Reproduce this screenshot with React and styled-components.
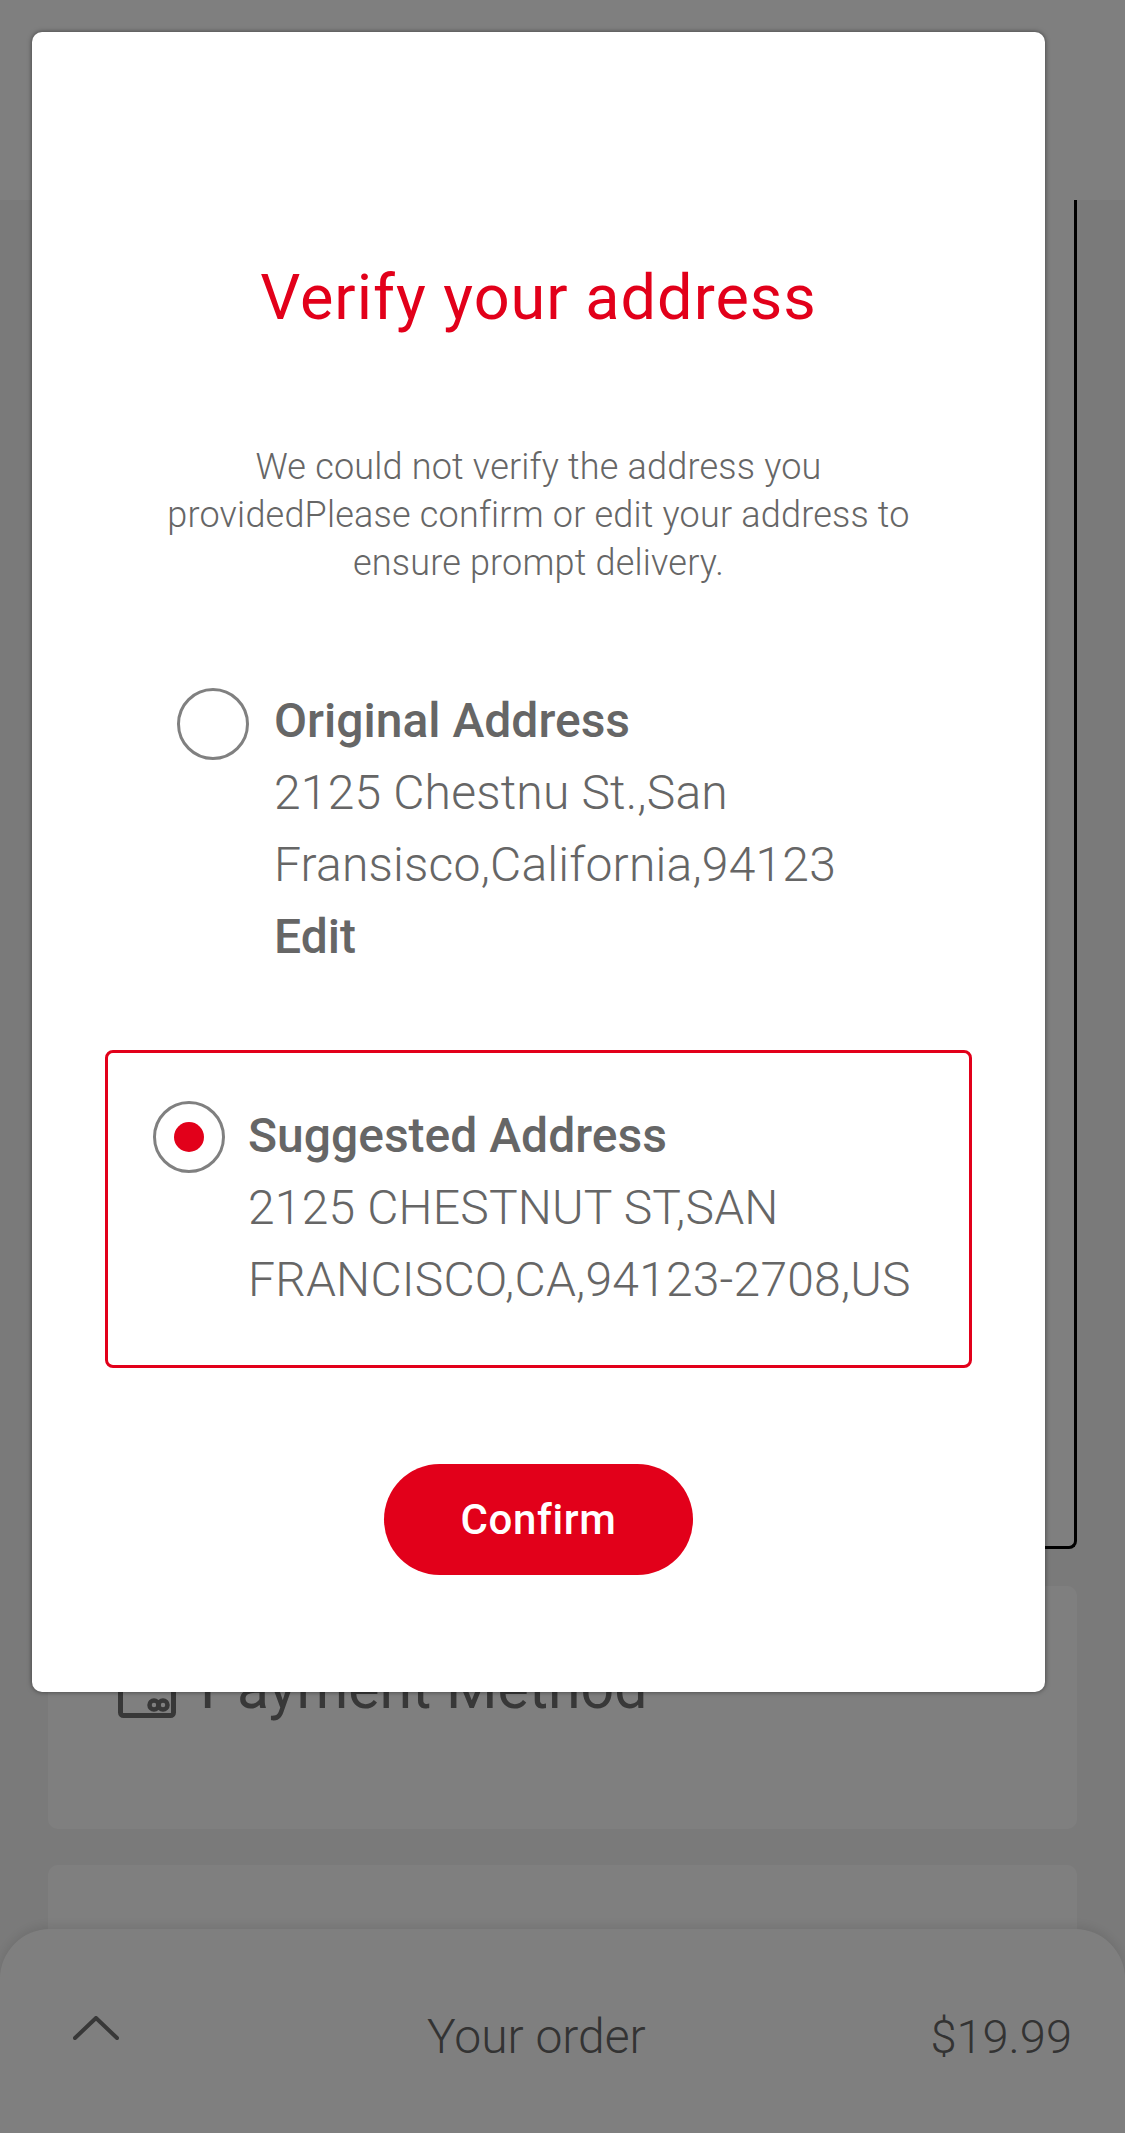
import styled, { createGlobalStyle } from 'styled-components';

const GlobalStyle = createGlobalStyle`
  html, body {
    margin: 0;
    padding: 0;
    background: #f5f5f5;
  }
  * {
    box-sizing: border-box;
  }
  body {
    font-family: Roboto, "Liberation Sans", sans-serif;
  }
`;

const App = () => {
  return (
    <Page>
      <GlobalStyle />
      <Header />
      <Content>
        <FocusedCard />
        <PaymentCard>
          <CardIcon viewBox="0 0 58 46" fill="none" stroke="#707070">
            <rect x="2.5" y="2.5" width="53" height="41" rx="3" strokeWidth="5" />
            <circle cx="36" cy="33" r="4.5" strokeWidth="4.5" />
            <circle cx="45" cy="33" r="4.5" strokeWidth="4.5" />
          </CardIcon>
          <CardTitle>Payment Method</CardTitle>
        </PaymentCard>
        <LastCard />
      </Content>
      <OrderBar>
        <Chevron viewBox="0 0 46 24" fill="none" stroke="#707070" strokeWidth="4" strokeLinecap="round" strokeLinejoin="round">
          <polyline points="2,22 23,2 44,22" />
        </Chevron>
        <OrderLabel>Your order</OrderLabel>
        <OrderTotal>$19.99</OrderTotal>
      </OrderBar>
      <Scrim>
        <Dialog>
          <Title>Verify your address</Title>
          <Message>
            We could not verify the address you providedPlease confirm or edit your address to ensure prompt delivery.
          </Message>
          <AddressOption>
            <Radio />
            <AddressText>
              <Strong>Original Address</Strong>
              <div>2125 Chestnu St.,San</div>
              <div>Fransisco,California,94123</div>
              <Strong>Edit</Strong>
            </AddressText>
          </AddressOption>
          <SelectedOption>
            <Radio $checked />
            <AddressText>
              <Strong>Suggested Address</Strong>
              <div>2125 CHESTNUT ST,SAN</div>
              <div>FRANCISCO,CA,94123-2708,US</div>
            </AddressText>
          </SelectedOption>
          <ConfirmButton>Confirm</ConfirmButton>
        </Dialog>
      </Scrim>
    </Page>
  );
};

export default App;

const Page = styled.div`
  position: relative;
  width: 1125px;
  height: 2133px;
  overflow: hidden;
  background: #f5f5f5;
`;

const Header = styled.div`
  height: 200px;
  background: #fff;
`;

const Content = styled.div`
  display: flex;
  flex-direction: column;
  padding: 0 48px;
`;

const FocusedCard = styled.div`
  height: 1349px;
  background: #fff;
  border: 3px solid #000;
  border-top: 0;
  border-radius: 0 0 8px 8px;
`;

const PaymentCard = styled.div`
  display: flex;
  align-items: flex-end;
  gap: 24px;
  height: 243px;
  margin-top: 37px;
  padding: 0 70px 111px;
  background: #fff;
  border-radius: 10px;
`;

const CardIcon = styled.svg`
  width: 58px;
  height: 46px;
  flex: none;
`;

const CardTitle = styled.div`
  font-size: 59px;
  line-height: 60px;
  color: #707070;
  white-space: nowrap;
`;

const LastCard = styled.div`
  height: 300px;
  margin-top: 36px;
  background: #fff;
  border-radius: 10px;
`;

const OrderBar = styled.div`
  position: absolute;
  left: 0;
  right: 0;
  bottom: 0;
  height: 204px;
  display: grid;
  grid-template-columns: 354px auto 1fr;
  align-items: center;
  padding: 10px 53px 0 73px;
  background: #fff;
  border-radius: 50px 50px 0 0;
  box-shadow: 0 -3px 12px rgba(0, 0, 0, 0.1);
`;

const Chevron = styled.svg`
  width: 46px;
  height: 24px;
  margin-top: -16px;
`;

const OrderLabel = styled.div`
  font-size: 48px;
  font-weight: 300;
  color: #666;
`;

const OrderTotal = styled.div`
  font-size: 47px;
  font-weight: 300;
  color: #666;
  text-align: right;
`;

const Scrim = styled.div`
  position: absolute;
  inset: 0;
  display: flex;
  justify-content: flex-start;
  align-items: flex-start;
  padding: 32px 0 0 32px;
  background: rgba(0, 0, 0, 0.5);
`;

const Dialog = styled.div`
  width: 1013px;
  height: 1660px;
  display: flex;
  flex-direction: column;
  align-items: center;
  padding-top: 228px;
  background: #fff;
  border-radius: 10px;
  box-shadow: 0 0 5px rgba(0, 0, 0, 0.5);
  color: #666;
`;

const Title = styled.h1`
  margin: 0;
  font-size: 63px;
  line-height: 76px;
  font-weight: 400;
  letter-spacing: 1px;
  color: #e2001a;
`;

const Message = styled.p`
  width: 760px;
  margin: 107px 0 0;
  font-size: 36px;
  font-weight: 300;
  letter-spacing: 0.2px;
  line-height: 48px;
  text-align: center;
`;

const AddressOption = styled.div`
  display: flex;
  align-items: flex-start;
  gap: 25px;
  align-self: flex-start;
  margin: 98px 0 0 145px;
  font-size: 48px;
  font-weight: 300;
  line-height: 72px;
`;

const SelectedOption = styled(AddressOption)`
  gap: 23px;
  width: 867px;
  height: 318px;
  margin: 77px 0 0 73px;
  padding: 47px 0 0 45px;
  border: 3px solid #e2001a;
  border-radius: 8px;
`;

const Radio = styled.span`
  display: flex;
  align-items: center;
  justify-content: center;
  flex: none;
  width: 72px;
  height: 72px;
  margin-top: ${(props) => (props.$checked ? '1px' : '3px')};
  border: 3px solid #808080;
  border-radius: 50%;

  &::after {
    content: '';
    display: ${(props) => (props.$checked ? 'block' : 'none')};
    width: 30px;
    height: 30px;
    border-radius: 50%;
    background: #e2001a;
  }
`;

const AddressText = styled.div`
  white-space: nowrap;
  letter-spacing: 0.2px;
`;

const Strong = styled.div`
  font-weight: 500;
  letter-spacing: 0;
`;

const ConfirmButton = styled.button`
  width: 309px;
  height: 111px;
  margin-top: 96px;
  border: 0;
  border-radius: 56px;
  background: #e2001a;
  color: #fff;
  font-family: inherit;
  font-size: 42px;
  font-weight: 500;
  letter-spacing: 0.6px;
`;
